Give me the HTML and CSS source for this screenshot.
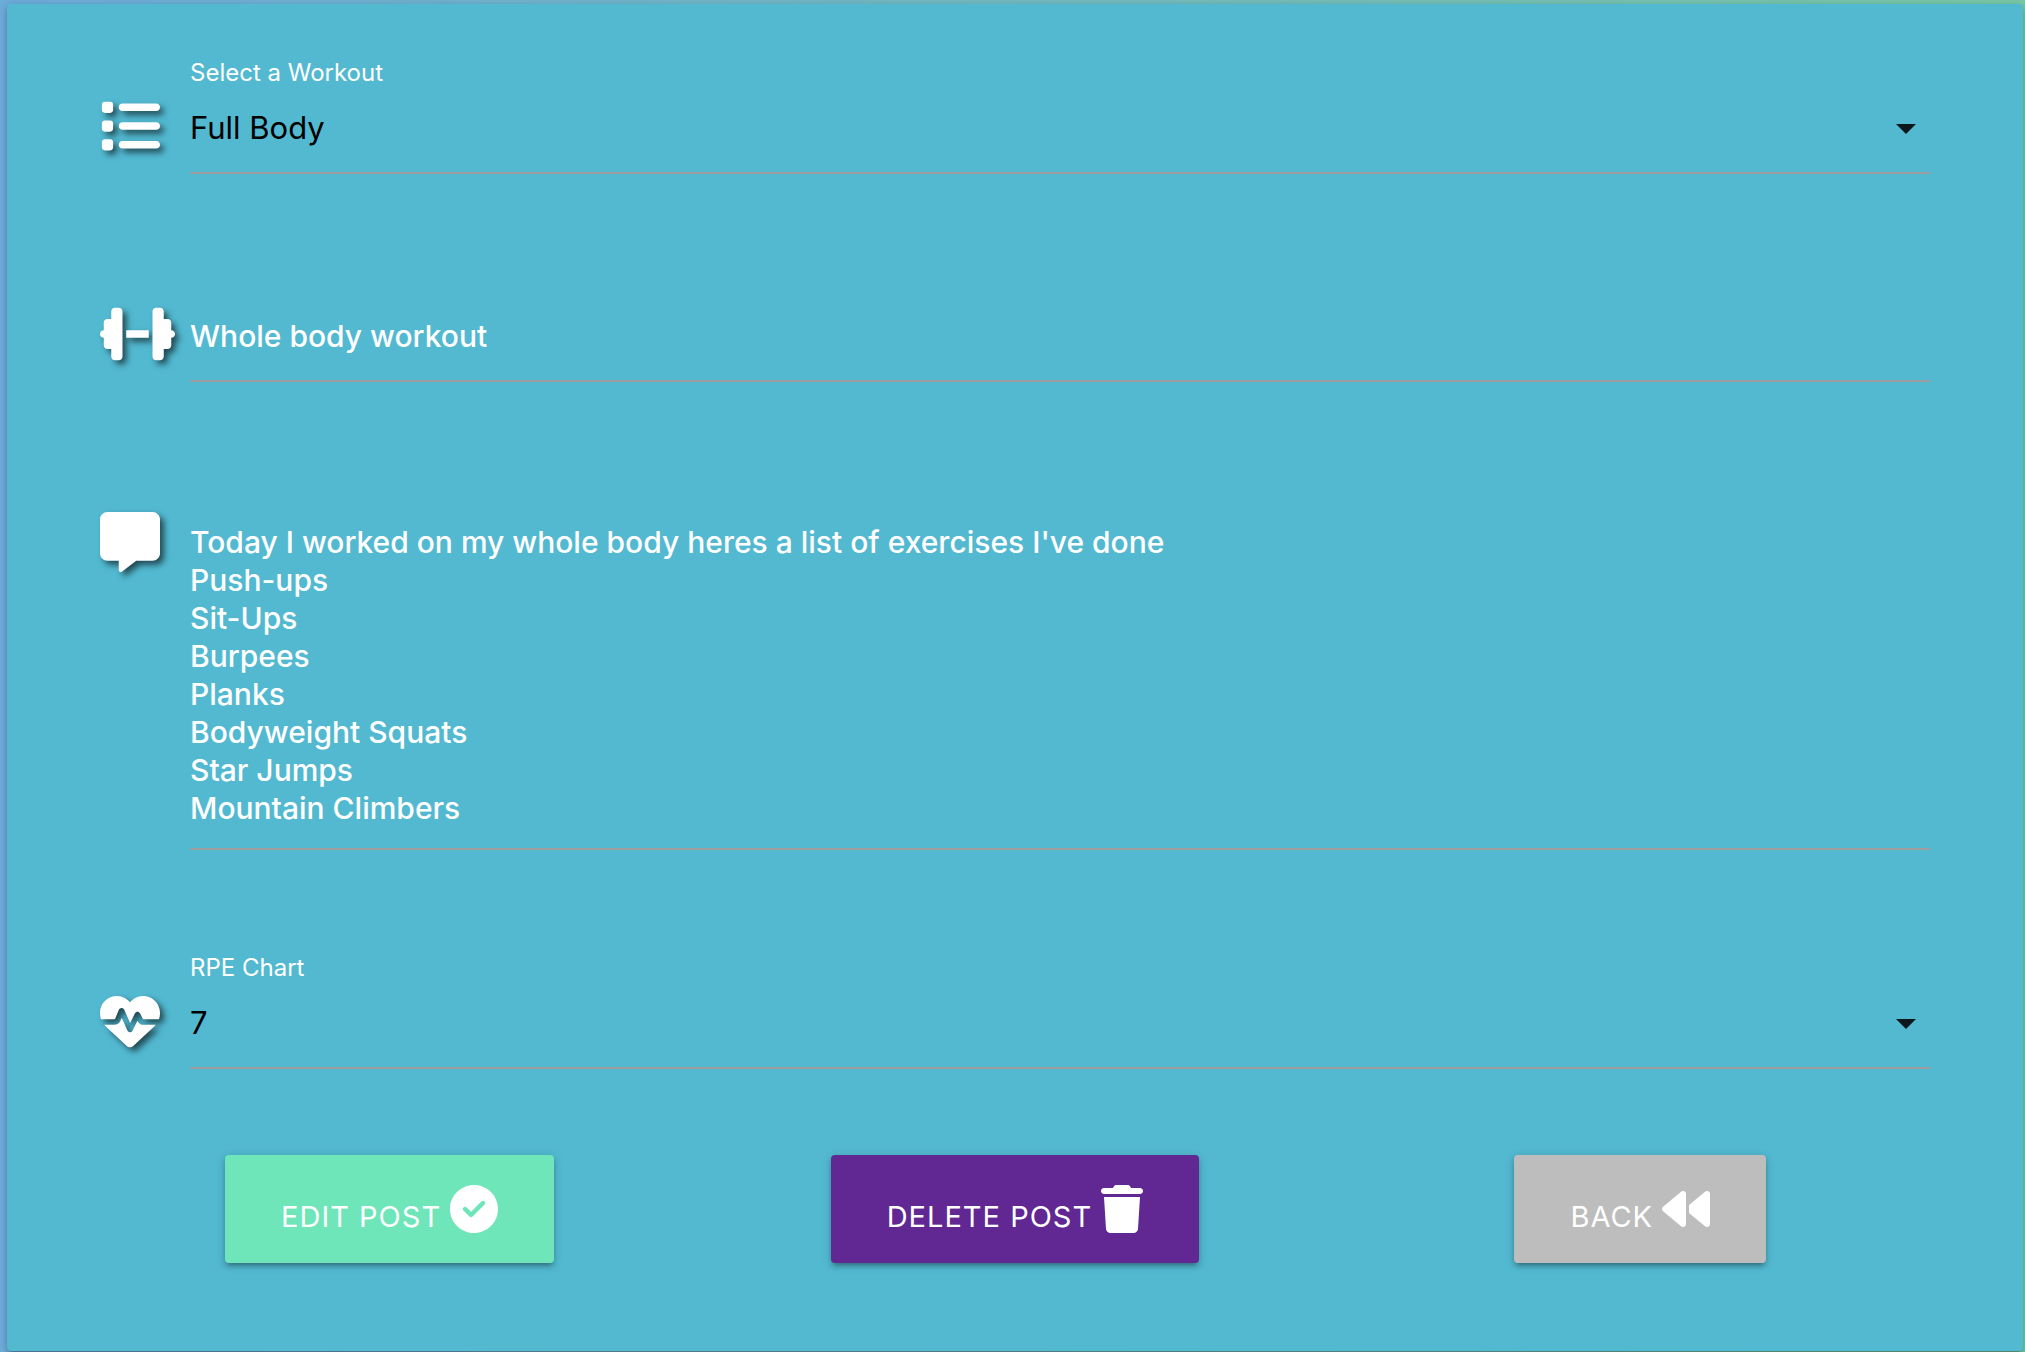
FILE: index.html
```html
<!DOCTYPE html>
<html lang="en">
<head>
  <meta charset="utf-8">
  <meta name="viewport" content="width=device-width, initial-scale=1">
  <title>Edit Post</title>
  <link rel="stylesheet" href="styles.css">
</head>
<body>
  <main class="card">
    <form class="post-form">
      <div class="field field-select">
        <label class="field-label" for="workout">Select a Workout</label>
        <svg class="field-icon" viewBox="0 0 512 512" aria-hidden="true"><path d="M40 48C26.700 48 16 58.700 16 72v48c0 13.300 10.700 24 24 24H88c13.300 0 24-10.700 24-24V72c0-13.300-10.700-24-24-24H40zM192 64c-17.700 0-32 14.300-32 32s14.300 32 32 32H480c17.700 0 32-14.300 32-32s-14.300-32-32-32H192zm0 160c-17.700 0-32 14.300-32 32s14.300 32 32 32H480c17.700 0 32-14.300 32-32s-14.300-32-32-32H192zm0 160c-17.700 0-32 14.300-32 32s14.300 32 32 32H480c17.700 0 32-14.300 32-32s-14.300-32-32-32H192zM16 232v48c0 13.300 10.700 24 24 24H88c13.300 0 24-10.700 24-24V232c0-13.300-10.700-24-24-24H40c-13.300 0-24 10.700-24 24zM40 368c-13.300 0-24 10.700-24 24v48c0 13.300 10.700 24 24 24H88c13.300 0 24-10.700 24-24V392c0-13.300-10.700-24-24-24H40z"/></svg>
        <div class="select-wrap">
          <select class="control" id="workout">
            <option selected>Full Body</option>
          </select>
          <svg class="caret" viewBox="0 0 20 10" aria-hidden="true"><path d="M0 0h20L10 10z"/></svg>
        </div>
      </div>

      <div class="field field-title">
        <svg class="field-icon wide" viewBox="0 0 640 512" aria-hidden="true"><path d="M96 64c0-17.700 14.300-32 32-32h32c17.700 0 32 14.300 32 32V448c0 17.700-14.300 32-32 32H128c-17.700 0-32-14.300-32-32V384H64c-17.700 0-32-14.300-32-32V288c-17.700 0-32-14.300-32-32s14.300-32 32-32V160c0-17.700 14.300-32 32-32H96V64zm448 0v64h32c17.700 0 32 14.300 32 32v64c17.700 0 32 14.300 32 32s-14.300 32-32 32v64c0 17.700-14.300 32-32 32H544v64c0 17.700-14.300 32-32 32H480c-17.700 0-32-14.300-32-32V64c0-17.700 14.300-32 32-32h32c17.700 0 32 14.300 32 32zM416 224v64H224V224H416z"/></svg>
        <input class="control control-text" type="text" aria-label="Title" value="Whole body workout">
      </div>

      <div class="field field-message">
        <svg class="field-icon" viewBox="0 0 512 512" aria-hidden="true"><path d="M64 0C28.700 0 0 28.700 0 64V352c0 35.300 28.700 64 64 64h96v80c0 6.100 3.400 11.600 8.800 14.300s11.900 2.100 16.800-1.500L309.300 416H448c35.300 0 64-28.700 64-64V64c0-35.300-28.700-64-64-64H64z"/></svg>
        <textarea class="control control-text control-area" rows="8" aria-label="Message">Today I worked on my whole body heres a list of exercises I've done
Push-ups
Sit-Ups
Burpees
Planks
Bodyweight Squats
Star Jumps
Mountain Climbers</textarea>
      </div>

      <div class="field field-rpe">
        <label class="field-label" for="rpe">RPE Chart</label>
        <svg class="field-icon" viewBox="0 0 512 512" aria-hidden="true"><path d="M228.300 469.100L47.600 300.400c-4.200-3.900-8.200-8.100-11.900-12.400h87c22.600 0 43-13.600 51.700-34.500l10.500-25.200 49.300 109.500c3.800 8.500 12.100 14 21.400 14.100s17.800-5 22-13.300L320 253.700l1.700 3.400c9.500 19 28.900 31 50.100 31H476.300c-3.700 4.300-7.700 8.500-11.900 12.400L283.700 469.100c-7.500 7-17.400 10.900-27.700 10.900s-20.200-3.900-27.700-10.900zM503.700 240h-132c-3 0-5.800-1.700-7.200-4.400l-23.200-46.300c-4.100-8.100-12.400-13.300-21.500-13.300s-17.400 5.100-21.500 13.300l-41.400 82.800L205.900 158.200c-3.900-8.700-12.700-14.300-22.200-14.100s-18.100 5.900-21.800 14.800l-31.800 76.300c-1.200 3-4.200 4.900-7.400 4.900H8.300C2.800 224.400 0 207.800 0 190.900v-5.800c0-69.900 50.500-129.500 119.400-141C165 36.500 211.400 51.400 244 84l12 12 12-12c32.600-32.600 79-47.500 124.600-39.900C461.500 55.600 512 115.200 512 185.100v5.800c0 16.900-2.800 33.500-8.300 49.100z"/></svg>
        <div class="select-wrap">
          <select class="control" id="rpe">
            <option selected>7</option>
          </select>
          <svg class="caret" viewBox="0 0 20 10" aria-hidden="true"><path d="M0 0h20L10 10z"/></svg>
        </div>
      </div>

      <div class="actions">
        <button class="btn btn-edit" type="submit">
          Edit Post
          <svg class="btn-icon" viewBox="0 0 512 512" aria-hidden="true"><path d="M256 512c141.400 0 256-114.600 256-256S397.400 0 256 0S0 114.600 0 256S114.600 512 256 512zM369 209L241 337c-9.400 9.400-24.600 9.400-33.900 0l-64-64c-9.400-9.400-9.400-24.600 0-33.900s24.600-9.400 33.900 0l47 47L335 175c9.400-9.400 24.600-9.400 33.900 0s9.400 24.600 0 33.900z"/></svg>
        </button>
        <button class="btn btn-delete" type="button">
          Delete Post
          <svg class="btn-icon narrow" viewBox="0 0 448 512" aria-hidden="true"><path d="M135.200 17.700L128 32H32C14.300 32 0 46.300 0 64S14.300 96 32 96H416c17.700 0 32-14.300 32-32s-14.300-32-32-32H320l-7.200-14.300C307.400 6.800 296.300 0 284.200 0H163.800c-12.100 0-23.200 6.800-28.600 17.700zM416 128H32L53.200 467c1.600 25.300 22.600 45 47.900 45H346.900c25.300 0 46.300-19.700 47.900-45L416 128z"/></svg>
        </button>
        <button class="btn btn-back" type="button">
          Back
          <svg class="btn-icon" viewBox="0 0 512 512" aria-hidden="true"><path d="M459.500 440.600c9.500 7.900 22.800 9.700 34.100 4.400s18.400-16.600 18.400-29V96c0-12.400-7.200-23.700-18.400-29s-24.500-3.600-34.100 4.400L288 214.300V297.700L459.500 440.600zM256 352V96c0-12.400-7.200-23.700-18.400-29s-24.500-3.600-34.100 4.400l-192 160C4.200 237.500 0 246.500 0 256s4.200 18.500 11.500 24.600l192 160c9.500 7.900 22.800 9.700 34.100 4.400s18.400-16.600 18.400-29V352z"/></svg>
        </button>
      </div>
    </form>
  </main>
</body>
</html>
```

FILE: styles.css
```css
* {
  box-sizing: border-box;
}

body {
  margin: 0;
  min-height: 100vh;
  padding: 4px 2px 1px 7px;
  background: linear-gradient(to right, #6eacdb, #78c8a8);
  font-family: Inter, "Liberation Sans", sans-serif;
  color: #fff;
}

.card {
  padding: 56px 70px 88px;
  background: #52b9d1;
  border-radius: 4px;
  box-shadow: 0 4px 4px rgba(0, 0, 0, 0.14), 0 6px 2px -4px rgba(0, 0, 0, 0.12), 0 2px 10px rgba(0, 0, 0, 0.2);
}

.post-form {
  display: flex;
  flex-direction: column;
}

.field {
  display: grid;
  grid-template-columns: 90px minmax(0, 1fr);
  padding: 0 23px;
}

.field-title {
  margin-top: 120px;
}

.field-message {
  margin-top: 130px;
}

.field-rpe {
  margin-top: 105px;
}

.field-label {
  grid-column: 2;
  font-size: 24px;
  line-height: 26px;
}

.field-icon {
  grid-column: 1;
  width: 60px;
  height: 60px;
  margin-top: 10px;
  overflow: visible;
  fill: #fff;
  filter: drop-shadow(4px 4px 3px rgba(0, 0, 0, 0.6));
}

.field-icon.wide {
  width: 75px;
}

.field-message .field-icon {
  margin-top: 0;
}

.select-wrap {
  position: relative;
}

.control {
  display: block;
  width: 100%;
  height: 88px;
  margin: 0;
  padding: 0 0 2px;
  border: 0;
  border-bottom: 2px solid #9e9e9e;
  border-radius: 0;
  outline: 0;
  background: transparent;
  color: #000;
  font-family: inherit;
  font-size: 31px;
  line-height: 38px;
  appearance: none;
}

.control-text {
  color: #fff;
  font-size: 30px;
  font-weight: 500;
}

.control-area {
  height: auto;
  padding: 11px 0 21px;
  overflow: hidden;
  resize: none;
}

.caret {
  position: absolute;
  top: 38px;
  right: 14px;
  width: 20px;
  height: 10px;
  fill: #0b181b;
  pointer-events: none;
}

.actions {
  display: grid;
  grid-template-columns: repeat(3, 1fr);
  justify-items: center;
  margin-top: 86px;
}

.btn {
  padding: 30px 56px;
  border: 0;
  border-radius: 4px;
  box-shadow: 0 4px 4px rgba(0, 0, 0, 0.14), 0 6px 2px -4px rgba(0, 0, 0, 0.12), 0 2px 10px rgba(0, 0, 0, 0.2);
  color: #fff;
  font-family: inherit;
  font-size: 29px;
  line-height: 24px;
  letter-spacing: 1px;
  text-transform: uppercase;
  white-space: nowrap;
  cursor: pointer;
}

.btn-edit {
  background: #6ee6b9;
}

.btn-delete {
  background: #612893;
}

.btn-back {
  background: #bdbdbd;
}

.btn-icon {
  width: 48px;
  height: 48px;
  vertical-align: -6px;
  fill: #fff;
}

.btn-icon.narrow {
  width: 42px;
}
```
